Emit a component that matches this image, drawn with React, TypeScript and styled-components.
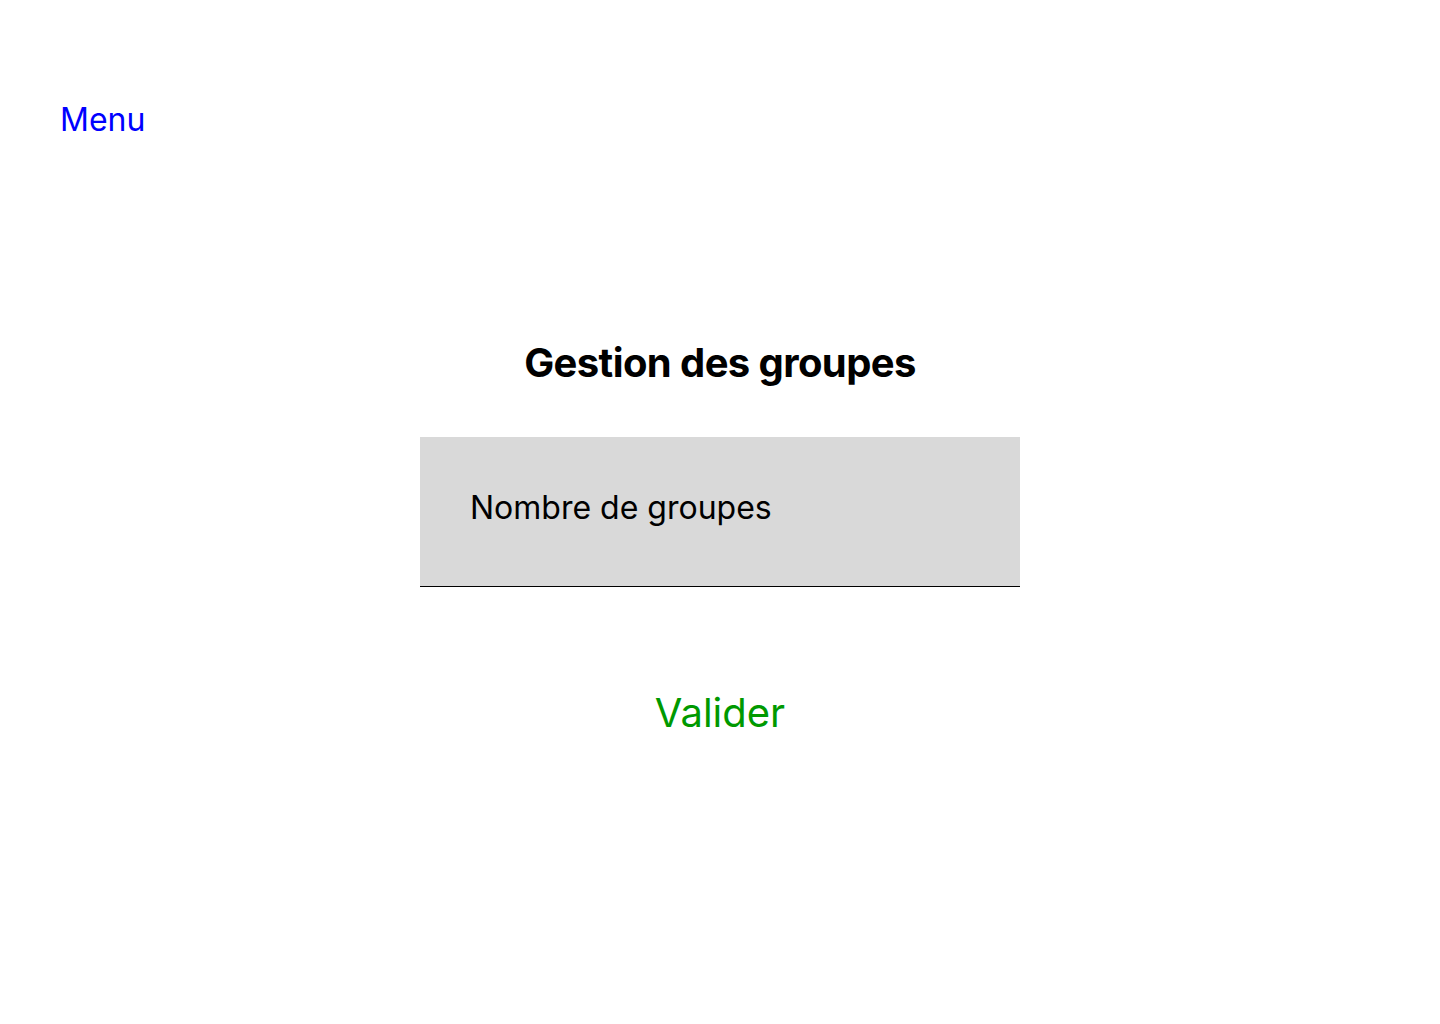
import styled, { createGlobalStyle } from "styled-components";

const GlobalStyle = createGlobalStyle`
  html, body {
    margin: 0;
    padding: 0;
    background: #fff;
    font-family: Inter, "Noto Sans", sans-serif;
  }
`;

const Page = styled.div`
  width: 1440px;
  height: 1024px;
  display: flex;
  flex-direction: column;
  box-sizing: border-box;
  padding: 100px 60px 0 60px;
`;

const MenuLink = styled.a`
  align-self: flex-start;
  font-size: 32px;
  line-height: 39px;
  color: #0000ff;
  text-decoration: none;
  cursor: pointer;
`;

const Main = styled.main`
  display: flex;
  flex-direction: column;
  align-items: center;
  margin-top: 200px;
`;

const Title = styled.h1`
  margin: 0;
  font-size: 40px;
  line-height: 48px;
  font-weight: 700;
  letter-spacing: -0.6px;
  color: #000;
`;

const Field = styled.div`
  margin-top: 50px;
  width: 600px;
  height: 150px;
  box-sizing: border-box;
  background: #d9d9d9;
  border-bottom: 1px solid #000;
  display: flex;
  align-items: center;
  padding: 0 0 9px 50px;
`;

const FieldLabel = styled.span`
  font-size: 32px;
  color: #000;
`;

const SubmitButton = styled.button`
  margin-top: 102px;
  background: none;
  border: none;
  padding: 0;
  font-family: inherit;
  font-size: 40px;
  line-height: 48px;
  color: #009900;
  cursor: pointer;
`;

export default function App() {
  return (
    <>
      <GlobalStyle />
      <Page>
        <MenuLink>Menu</MenuLink>
        <Main>
          <Title>Gestion des groupes</Title>
          <Field>
            <FieldLabel>Nombre de groupes</FieldLabel>
          </Field>
          <SubmitButton>Valider</SubmitButton>
        </Main>
      </Page>
    </>
  );
}
